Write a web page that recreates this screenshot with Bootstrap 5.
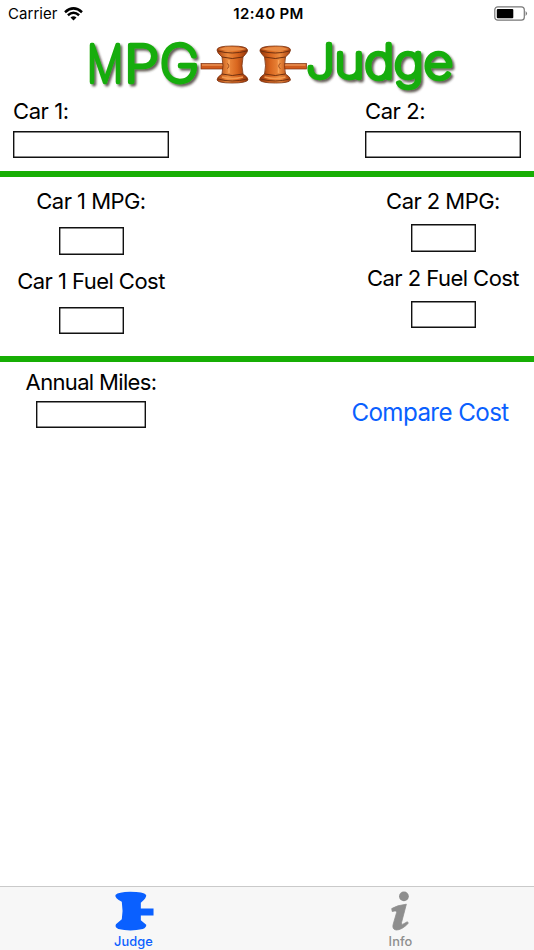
<!DOCTYPE html>
<html lang="en">
<head>
<meta charset="utf-8">
<meta name="viewport" content="width=device-width, initial-scale=1">
<title>MPG Judge</title>
<link href="https://cdn.jsdelivr.net/npm/bootstrap@5.3.0/dist/css/bootstrap.min.css" rel="stylesheet">
<style>
body{font-family:Inter,"Liberation Sans",sans-serif;color:#000;background:#fff;height:950px;overflow:hidden}
.statusbar{height:28px;font-size:15px;line-height:28px}
.statusbar .carrier{letter-spacing:.05px;padding-left:8px;width:179px;gap:6px}
.statusbar .clock{letter-spacing:.35px}
.statusbar .power{padding-right:6px;width:176px}
.brand{height:69px}
.brand text{font-family:Inter,sans-serif;font-weight:100}
.lbl{font-size:22px;line-height:28px;letter-spacing:-.54px;white-space:nowrap}
.names .lbl{letter-spacing:-.4px}
.field{height:27.4px;border:0;border-radius:0;box-shadow:inset 0 0 0 1.4px #111;background:#fff;padding:0 6px;display:block;outline:0}
.f-name{width:156px}.f-num{width:65px}.f-miles{width:110px}
.rule{height:6.4px;background:#17ae04}
.names{height:73.6px;padding:0 13px}
.names .lbl{margin-bottom:5.5px}
.costs{height:178.6px}
.side{width:182px}
.side-l,.side-r{padding-top:10.4px}
.side-l .field{margin:11.9px 0 12px}
.side-r .field{margin:8.9px 0 12.2px}
.miles{padding-top:6px}
.miles .lbl{letter-spacing:-.66px}
.f-miles{margin-top:5px}
.compare{font-size:24.2px;line-height:30px;color:#0a60ff;padding:0;border:0;margin:36px 0 0;letter-spacing:-.6px;white-space:nowrap;width:208px}
.tabs{height:64px;background:#f7f7f7;border-top:1px solid #cacaca}
.tab{color:#8e8e8e;font-size:12.8px;line-height:16px;font-weight:500;letter-spacing:.1px;text-decoration:none;padding-top:4px}
.tab.active{color:#0a60ff}
.tab span{margin-top:2px}
</style>
<script src="https://cdn.jsdelivr.net/npm/bootstrap@5.3.0/dist/js/bootstrap.bundle.min.js"></script>
</head>
<body class="d-flex flex-column">
<header>
  <div class="statusbar d-flex justify-content-between">
    <div class="carrier d-flex align-items-center"><span>Carrier</span>
      <svg width="19" height="14" viewBox="0 0 19 14"><g fill="none" stroke="#000" stroke-width="2.5"><path d="M1 5.2Q9.500-2.400 18 5.200"/><path d="M3.900 8.300Q9.500 3.300 15.100 8.300"/></g><path d="M6.500 10.400Q9.500 7.900 12.500 10.400L9.500 13.500z"/></svg>
    </div>
    <div class="clock fw-semibold">12:40 PM</div>
    <div class="power d-flex align-items-center justify-content-end">
      <svg width="34" height="16" viewBox="0 0 34 16"><rect x=".8" y=".8" width="29.500" height="13.400" rx="3" fill="none" stroke="#777" stroke-width="1.200"/><rect x="2.800" y="3" width="16.500" height="9.200" rx="1"/><path d="M31.600 5Q34.500 7.500 31.600 10z" fill="#777"/></svg>
    </div>
  </div>
  <div class="brand">
    <svg width="534" height="69" viewBox="0 28 534 69" role="img" aria-label="MPG Judge">
      <defs>
        <linearGradient id="wood" x2="1"><stop offset="0" stop-color="#a63c0c"/><stop offset=".35" stop-color="#ed8b3e"/><stop offset=".65" stop-color="#d9661f"/><stop offset="1" stop-color="#8e3008"/></linearGradient>
        <filter id="drop" x="-10%" y="-20%" width="125%" height="150%"><feDropShadow dx="2" dy="2.200" stdDeviation="1.100" flood-color="#302820" flood-opacity=".75"/></filter>
        <g id="gavel">
          <rect x="201" y="63.500" width="28" height="5.500" fill="#cf5a1b" stroke="#7d3210" stroke-width=".7"/><path d="M202 65h25" stroke="#efa064" stroke-width="1.200"/>
          <path d="M217 50Q217 46 232 46T247.500 50Q248 52 243 57Q241 66 243 74Q248 77 248 80Q246 83 232 83T217 80Q217 77 222 74Q224 66 222 57Q217 53 217 50z" fill="url(#wood)" stroke="#79300d" stroke-width=".8"/>
          <path d="M218 49Q232 45 247 49Q232 53 218 49z" fill="#e98b45"/>
          <path d="M218 51Q232 55 247 51M222 57Q232 60 243 57M222 74Q232 77 243 74M218 79Q232 83 247 79" fill="none" stroke="#70300f" stroke-width="1"/>
          <path d="M222 77Q232 80 243 77" fill="none" stroke="#f39a50" stroke-width="1.500"/>
          <path d="M229 60v13" stroke="#ffae67" stroke-width="1.500" opacity=".7"/>
          <path d="M227 63.500a2.600 2.600 0 0 1 0 5" fill="none" stroke="#833511" stroke-width=".7"/>
        </g>
      </defs>
      <g filter="url(#drop)" fill="#18ad09" stroke="#18ad09" stroke-width="4.600" stroke-linejoin="round">
        <text font-size="51" y="81.500" x="87" textLength="36" lengthAdjust="spacingAndGlyphs">M</text>
        <text font-size="51" y="81.500" x="124" textLength="35" lengthAdjust="spacingAndGlyphs">P</text>
        <text font-size="51" y="81.500" x="160" textLength="39" lengthAdjust="spacingAndGlyphs">G</text>
        <text font-size="46" y="77.500" x="306" textLength="147" lengthAdjust="spacingAndGlyphs">Judge</text>
      </g>
      <use href="#gavel"/>
      <use href="#gavel" transform="translate(507.500 0) scale(-1 1)"/>
    </svg>
  </div>
</header>
<main class="flex-grow-1">
  <section class="names d-flex justify-content-between">
    <div><label class="lbl d-block" for="car1">Car 1:</label><input id="car1" class="field f-name"></div>
    <div><label class="lbl d-block" for="car2">Car 2:</label><input id="car2" class="field f-name"></div>
  </section>
  <div class="rule"></div>
  <section class="costs d-flex justify-content-between">
    <div class="side side-l d-flex flex-column align-items-center">
      <label class="lbl" for="mpg1">Car 1 MPG:</label><input id="mpg1" class="field f-num">
      <label class="lbl" for="fuel1">Car 1 Fuel Cost</label><input id="fuel1" class="field f-num">
    </div>
    <div class="side side-r d-flex flex-column align-items-center">
      <label class="lbl" for="mpg2">Car 2 MPG:</label><input id="mpg2" class="field f-num">
      <label class="lbl" for="fuel2">Car 2 Fuel Cost</label><input id="fuel2" class="field f-num">
    </div>
  </section>
  <div class="rule"></div>
  <section class="d-flex justify-content-between align-items-start">
    <div class="side miles d-flex flex-column align-items-center">
      <label class="lbl" for="miles">Annual Miles:</label><input id="miles" class="field f-miles">
    </div>
    <button class="btn compare" type="button">Compare Cost</button>
  </section>
</main>
<nav class="tabs d-flex">
  <a href="#" class="tab active w-50 d-flex flex-column align-items-center">
    <svg width="42" height="42" viewBox="0 0 42 42"><path d="M2 4Q5 1 17 .8Q31 .8 33.500 4Q34 7 28 12V18H41V25H28V30L33.500 34.500Q34 37 30 39Q17 42 5 39Q1 37 2.500 34L8.500 29Q10 20 8.500 11Q1 7 2 4z" fill="#0a60ff"/></svg>
    <span>Judge</span>
  </a>
  <a href="#" class="tab w-50 d-flex flex-column align-items-center">
    <svg width="42" height="42" viewBox="1 0 42 42"><circle cx="25" cy="5.500" r="5" fill="#8e8e8e"/><path d="M12.500 18Q18 14.500 27.500 13.500L22.500 32.500Q22 35 24 34L28.500 31.500L29.500 33Q23 40 17 40Q12.500 39 14 34L17.500 22Q18 19.500 13 21z" fill="#8e8e8e" stroke="#8e8e8e" stroke-width=".8"/></svg>
    <span>Info</span>
  </a>
</nav>
</body>
</html>
